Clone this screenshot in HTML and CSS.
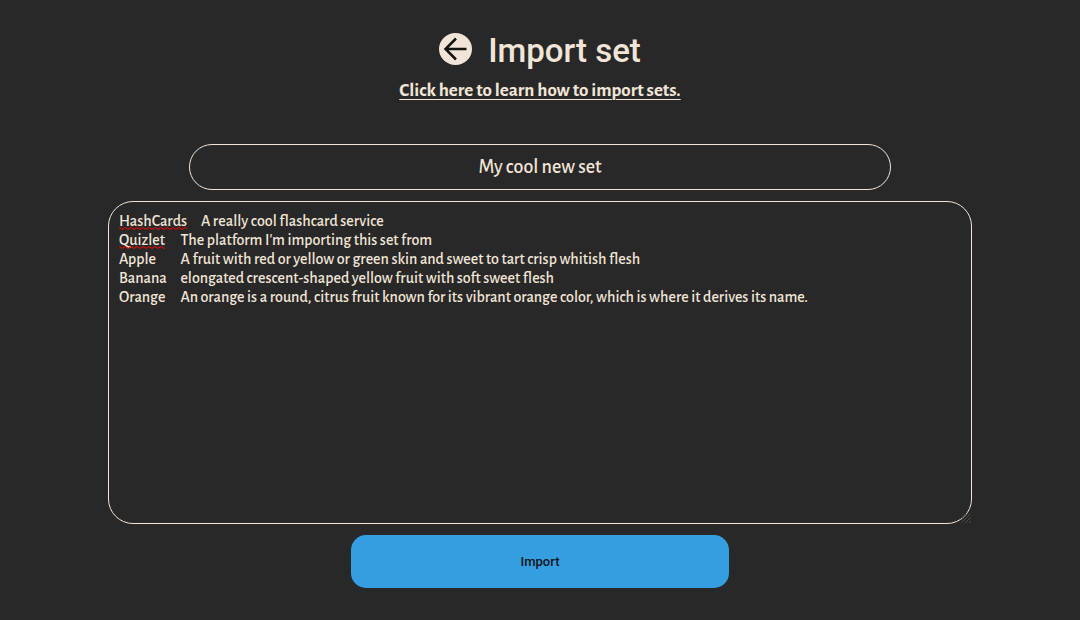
FILE: index.html
```html
<!DOCTYPE html>
<html lang="en">
<head>
<meta charset="utf-8">
<meta name="viewport" content="width=device-width, initial-scale=1">
<title>Import set</title>
<link rel="stylesheet" href="styles.css">
</head>
<body>
<main class="page">
  <header class="header">
    <div class="heading">
      <button class="back" type="button" aria-label="Back">
        <svg viewBox="0 0 33 32" aria-hidden="true">
          <ellipse cx="16.5" cy="16" rx="16.5" ry="16"/>
          <path d="M27.500 16H6.500M17 5.500L6.500 16L17 26.500"/>
        </svg>
      </button>
      <h1 class="title">Import set</h1>
    </div>
    <a class="help" href="#help">Click here to learn how to import sets.</a>
  </header>
  <form class="form">
    <input class="name" type="text" aria-label="Set name" value="My cool new set">
    <div class="editor">
      <textarea class="cards" aria-label="Cards" spellcheck="false">HashCards	A really cool flashcard service
Quizlet	The platform I'm importing this set from
Apple		A fruit with red or yellow or green skin and sweet to tart crisp whitish flesh
Banana	elongated crescent-shaped yellow fruit with soft sweet flesh
Orange	An orange is a round, citrus fruit known for its vibrant orange color, which is where it derives its name.</textarea>
      <svg class="spelling" aria-hidden="true">
        <defs>
          <pattern id="wave" width="6" height="19" patternUnits="userSpaceOnUse">
            <path d="M-1 16L0 15.500L3 17.500L6 15.500L7 16"/>
          </pattern>
        </defs>
        <rect width="68" height="19" fill="url(#wave)"/>
        <rect y="19" width="46" height="19" fill="url(#wave)"/>
      </svg>
    </div>
    <button class="submit" type="button">Import</button>
  </form>
</main>
</body>
</html>
```
FILE: styles.css
```css
* {
  box-sizing: border-box;
}

body {
  margin: 0;
  min-height: 100vh;
  background: #282828;
  color: #f2e5d7;
  font-family: "Alegreya Sans", Lato, sans-serif;
}

.page {
  padding: 28px 10% 32px;
}

.header {
  display: flex;
  flex-direction: column;
  align-items: center;
  gap: 5px;
}

.heading {
  display: flex;
  align-items: center;
  gap: 16px;
}

.back {
  width: 33px;
  height: 32px;
  padding: 0;
  margin-bottom: 4px;
  border: 0;
  border-radius: 50%;
  background: none;
  cursor: pointer;
}

.back svg {
  display: block;
  width: 100%;
}

.back ellipse {
  fill: #f2e5d7;
}

.back path {
  fill: none;
  stroke: #141414;
  stroke-width: 2.5;
}

.title {
  margin: 0;
  font: 500 33px/46px Roboto, sans-serif;
}

.help {
  color: inherit;
  font-size: 19px;
  font-weight: 700;
  line-height: 24px;
  text-underline-offset: 3px;
  text-decoration-thickness: 1px;
}

.form {
  display: flex;
  flex-direction: column;
  align-items: center;
  gap: 11px;
  margin-top: 41px;
}

.name,
.cards {
  border: 1px solid #f2e5d7;
  border-radius: 25px;
  background: transparent;
  color: inherit;
  font-family: inherit;
  font-weight: 500;
}

.name {
  width: 65vw;
  height: 46px;
  padding: 0 10px;
  font-size: 20px;
  text-align: center;
}

.editor {
  position: relative;
  width: 100%;
}

.cards {
  display: block;
  width: 100%;
  height: 323px;
  padding: 10px;
  font-size: 16px;
  line-height: 19px;
}

.cards::-webkit-resizer {
  background:
    repeating-linear-gradient(135deg, transparent 0 2px, #4a4a4a 2px 3px)
    right bottom / 9px 9px no-repeat;
}

.spelling {
  position: absolute;
  top: 11px;
  left: 11px;
  width: 80px;
  height: 38px;
  pointer-events: none;
}

.spelling path {
  fill: none;
  stroke: #f00;
  stroke-width: 1;
}

.submit {
  width: 35vw;
  height: 53px;
  border: 0;
  border-radius: 15px;
  background: #359ee1;
  color: #141414;
  font: 500 13px Roboto, sans-serif;
  cursor: pointer;
}
```
